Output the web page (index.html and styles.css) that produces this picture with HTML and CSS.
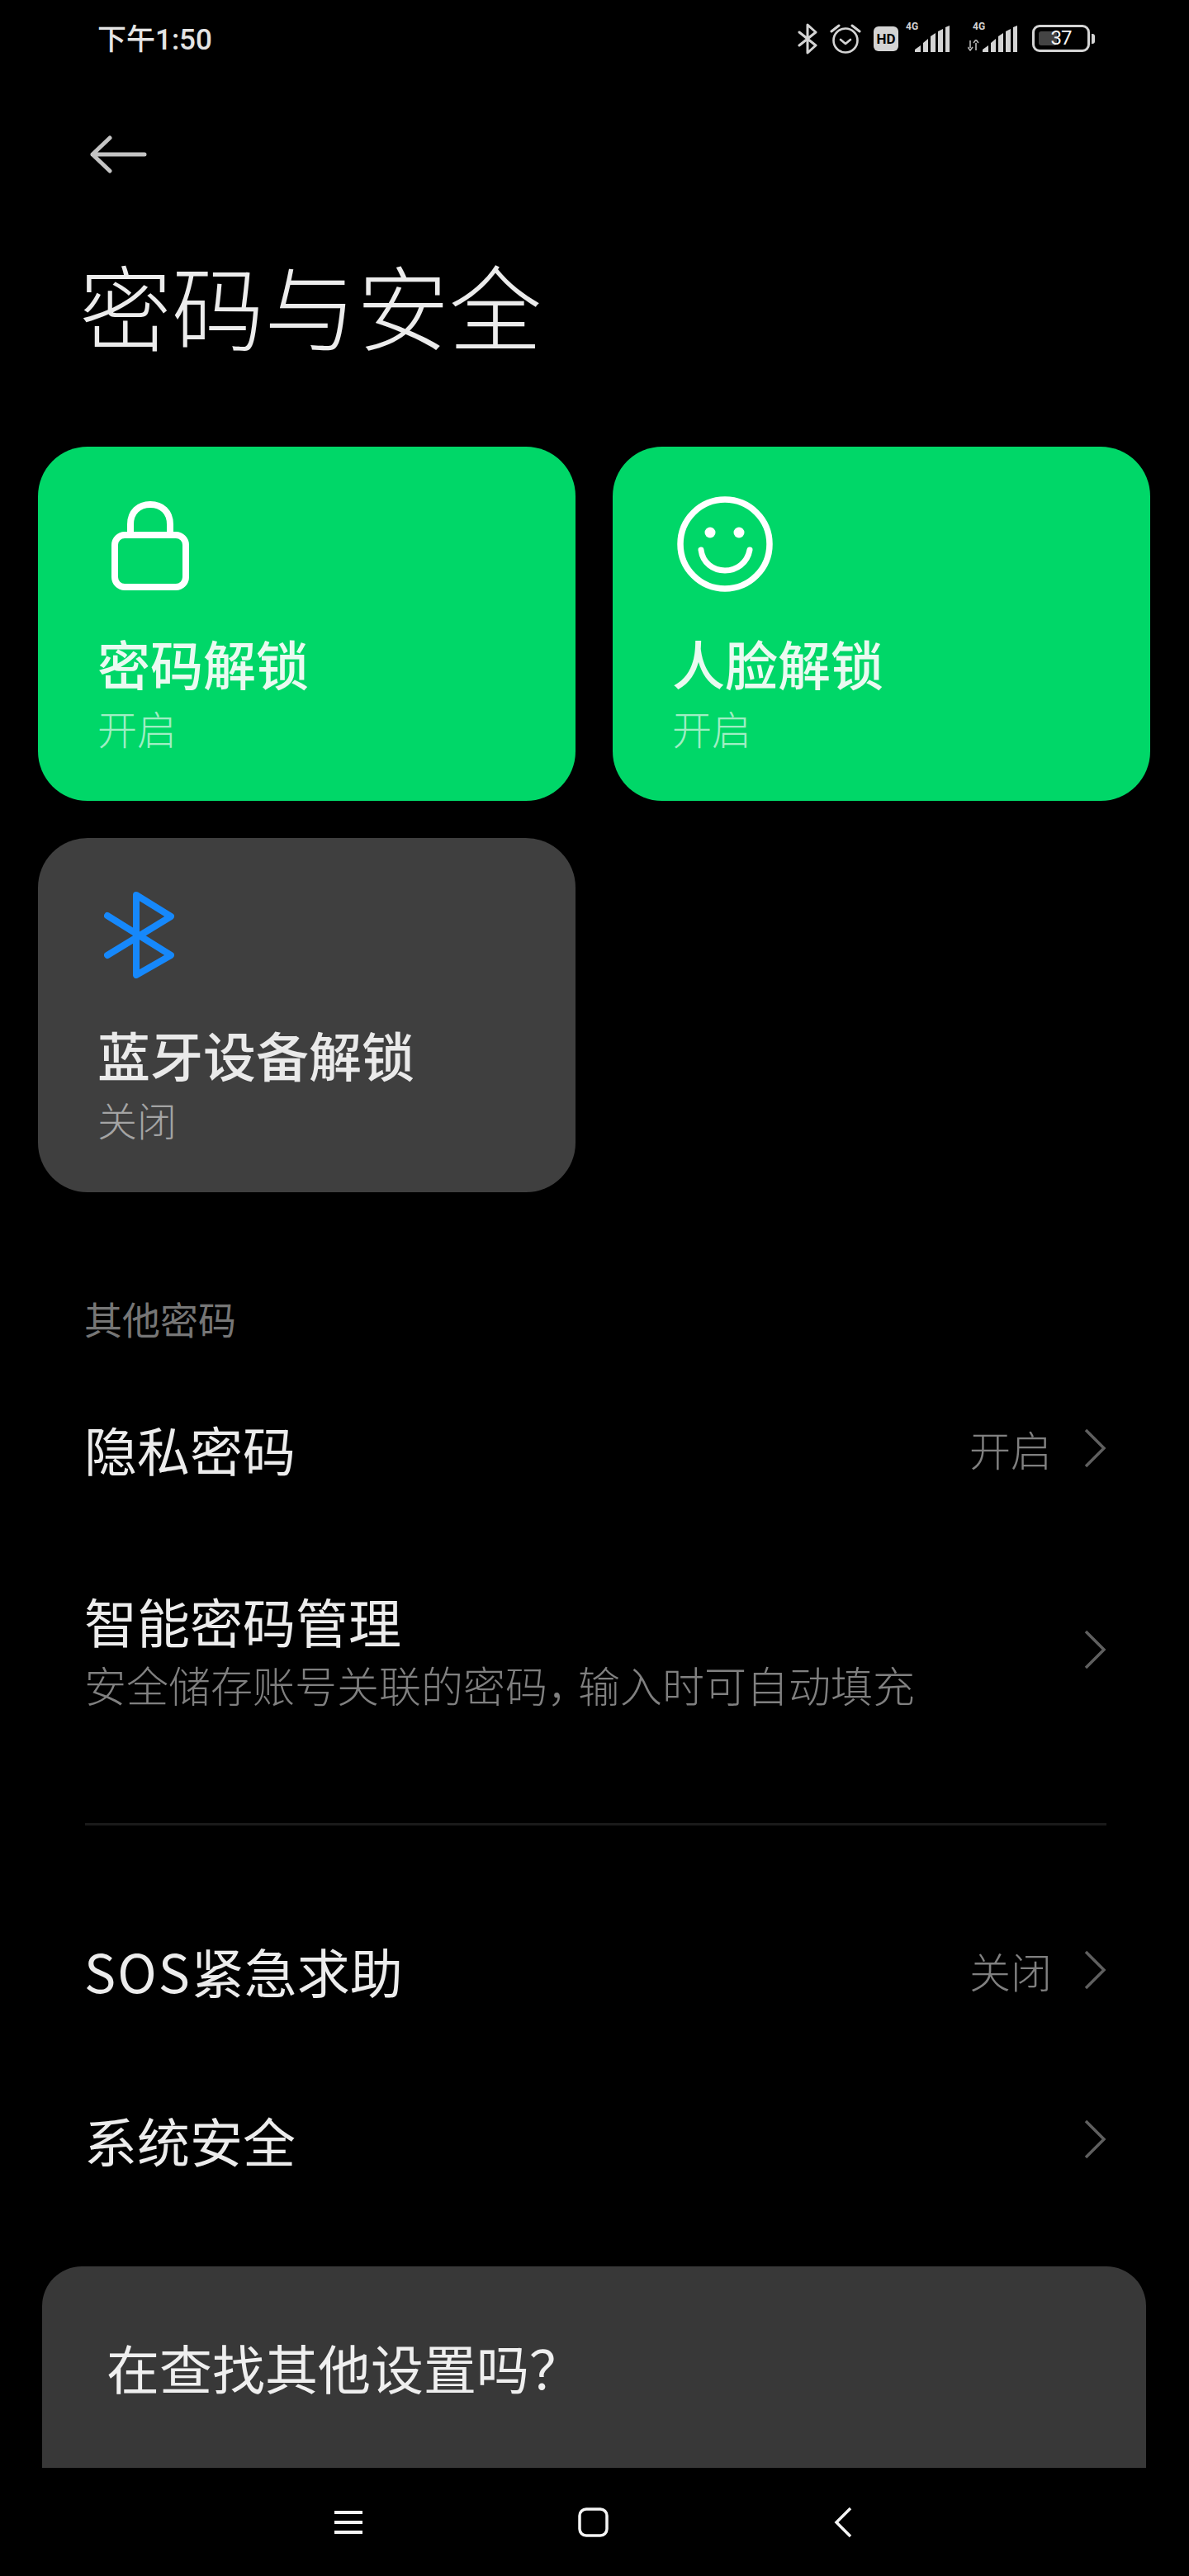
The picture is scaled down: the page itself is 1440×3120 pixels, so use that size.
FILE: index.html
```html
<!DOCTYPE html>
<html lang="zh-CN">
<head>
<meta charset="utf-8">
<title>密码与安全</title>
<link rel="stylesheet" href="styles.css">
</head>
<body>
<div class="screen">
  <header class="status">
    <span class="time">下午1:50</span>
    <div class="status-icons">
      <svg class="si" width="24" height="38" viewBox="0 0 24 38"><path d="M2 11l20 16-10 9V2l10 9L2 27" fill="none" stroke="#d4d4d4" stroke-width="3" stroke-linejoin="round" stroke-linecap="round"/></svg>
      <svg class="si alarm" width="38" height="38" viewBox="0 0 38 38"><circle cx="19" cy="21" r="14.5" fill="none" stroke="#d4d4d4" stroke-width="2.6"/><path d="M13 20l6 5 6-5" fill="none" stroke="#d4d4d4" stroke-width="2.6" stroke-linecap="round" stroke-linejoin="round"/><path d="M2 10l9-7M36 10l-9-7" fill="none" stroke="#d4d4d4" stroke-width="3" stroke-linecap="round"/></svg>
      <span class="hd">HD</span>
      <div class="signal"><span class="net">4G</span><svg width="44" height="32" viewBox="0 0 44 32"><path d="M0 32v-3l7-5v8zM10 32V21l6-5v16zM19 32V13l6-4v23zM28 32V7l6-3v28zM37 32V2l5-2v32z" fill="#d4d4d4"/></svg></div>
      <div class="signal second"><span class="net">4G</span><svg class="arrows" width="14" height="14" viewBox="0 0 14 14"><path d="M3 1v9M0 9l3 4 3-4M10 13V4M7 4l3-4 3 4" stroke="#b8b8b8" stroke-width="1.6" fill="none"/></svg><svg width="44" height="32" viewBox="0 0 44 32"><path d="M0 32v-3l7-5v8zM10 32V21l6-5v16zM19 32V13l6-4v23zM28 32V7l6-3v28zM37 32V2l5-2v32z" fill="#d4d4d4"/></svg></div>
      <div class="battery"><div class="batt-body"><span class="batt-fill"></span><span class="batt-num">37</span></div><span class="batt-cap"></span></div>
    </div>
  </header>

  <div class="back">
    <svg width="70" height="46" viewBox="0 0 70 46"><path d="M24 3L3 23l21 20M3 23h63" fill="none" stroke="#c4c4c4" stroke-width="5" stroke-linecap="round" stroke-linejoin="round"/></svg>
  </div>

  <h1 class="title">密码与安全</h1>

  <section class="cards">
    <article class="card on">
      <div class="card-icon">
        <svg class="lock" width="94" height="108" viewBox="0 0 94 108"><path d="M23 41V28C23 13 33 4 47 4s24 9 24 24v13" fill="none" stroke="#fff" stroke-width="8"/><rect x="4" y="41" width="86" height="63" rx="12" fill="none" stroke="#fff" stroke-width="8"/></svg>
      </div>
      <div class="card-title">密码解锁</div>
      <div class="card-sub">开启</div>
    </article>
    <article class="card on">
      <div class="card-icon">
        <svg class="face" width="116" height="116" viewBox="0 0 116 116"><circle cx="58" cy="58" r="54" fill="none" stroke="#fff" stroke-width="7.5"/><circle cx="40" cy="44" r="6.5" fill="#fff"/><circle cx="75" cy="44" r="6.5" fill="#fff"/><path d="M29 65c2 16 15 25 29 25s27-9 30-25" fill="none" stroke="#fff" stroke-width="7" stroke-linecap="round"/></svg>
      </div>
      <div class="card-title">人脸解锁</div>
      <div class="card-sub">开启</div>
    </article>
    <article class="card off">
      <div class="card-icon">
        <svg class="bt" width="85" height="105" viewBox="0 0 85 105"><path d="M4 29l77 48-42 24V4l42 26L4 77" fill="none" stroke="#1688fb" stroke-width="8" stroke-linejoin="round" stroke-linecap="round"/></svg>
      </div>
      <div class="card-title">蓝牙设备解锁</div>
      <div class="card-sub">关闭</div>
    </article>
  </section>

  <div class="section-label">其他密码</div>

  <div class="row row-a">
    <div class="row-main"><div class="row-title">隐私密码</div></div>
    <span class="row-value">开启</span>
    <svg class="chev" width="28" height="48" viewBox="0 0 28 48"><path d="M3 2l22 22L3 46" fill="none" stroke="#5f5f5f" stroke-width="3.5"/></svg>
  </div>
  <div class="row row-b">
    <div class="row-main two"><div class="row-title">智能密码管理</div><div class="row-desc">安全储存账号关联的密码<span class="comma">，</span>输入时可自动填充</div></div>
    <svg class="chev" width="28" height="48" viewBox="0 0 28 48"><path d="M3 2l22 22L3 46" fill="none" stroke="#5f5f5f" stroke-width="3.5"/></svg>
  </div>
  <div class="divider"></div>
  <div class="row row-c">
    <div class="row-main"><div class="row-title"><span class="latin">SOS</span>紧急求助</div></div>
    <span class="row-value">关闭</span>
    <svg class="chev" width="28" height="48" viewBox="0 0 28 48"><path d="M3 2l22 22L3 46" fill="none" stroke="#5f5f5f" stroke-width="3.5"/></svg>
  </div>
  <div class="row row-d">
    <div class="row-main"><div class="row-title">系统安全</div></div>
    <svg class="chev" width="28" height="48" viewBox="0 0 28 48"><path d="M3 2l22 22L3 46" fill="none" stroke="#5f5f5f" stroke-width="3.5"/></svg>
  </div>

  <section class="find"><div class="find-title">在查找其他设置吗？</div></section>

  <nav class="navbar">
    <svg width="36" height="30" viewBox="0 0 36 30"><path d="M1 3h34M1 15h34M1 27h34" stroke="#f4f4f4" stroke-width="4"/></svg>
    <svg width="37" height="36" viewBox="0 0 37 36"><rect x="2" y="2" width="33" height="32" rx="8" fill="none" stroke="#f4f4f4" stroke-width="3.5"/></svg>
    <svg class="nav-back" width="22" height="38" viewBox="0 0 22 38"><path d="M20 2L3 19l17 17" fill="none" stroke="#f4f4f4" stroke-width="3.5"/></svg>
  </nav>
</div>
</body>
</html>
```

FILE: styles.css
```css
* { box-sizing: border-box; margin: 0; padding: 0; }
html, body { background: #000; }
body { font-family: "Noto Sans CJK SC", "Noto Sans", sans-serif; color: #e9e9e9; }
.screen { width: 1440px; height: 3120px; overflow: hidden; position: relative; display: flex; flex-direction: column; }

.status { height: 96px; padding: 0 114px 0 118px; display: flex; align-items: flex-start; justify-content: space-between; flex: none; }
.time { font-size: 35px; line-height: 48px; font-weight: 500; color: #e4e4e4; font-family: "Roboto", "Noto Sans CJK SC", sans-serif; padding-top: 25px; letter-spacing: 0; }
.status-icons { display: flex; align-items: flex-start; padding-top: 28px; }
.si { display: block; }
.alarm { margin-left: 15px; margin-top: 0; }
.hd { margin-left: 15px; margin-top: 4px; width: 30px; height: 30px; border-radius: 6px; background: #d4d4d4; color: #000; font: 700 17px/30px "Roboto", sans-serif; text-align: center; }
.signal { position: relative; margin-left: 20px; width: 44px; height: 36px; margin-top: 3px; }
.signal svg:last-child { display: block; }
.signal .net { position: absolute; left: -11px; top: -6px; font: 700 12px/14px "Roboto", sans-serif; color: #d4d4d4; }
.signal.second { margin-left: 38px; }
.signal.second .net { left: -12px; }
.signal .arrows { position: absolute; left: -18px; top: 17px; }
.battery { display: flex; align-items: center; margin-left: 16px; margin-top: 2px; }
.batt-body { position: relative; width: 70px; height: 33px; border: 3px solid #d4d4d4; border-radius: 9px; display: flex; align-items: center; justify-content: center; }
.batt-fill { position: absolute; left: 5px; top: 5px; bottom: 5px; width: 22px; background: #444; border-radius: 3px; }
.batt-num { position: relative; font: 400 24px/27px "Roboto", sans-serif; letter-spacing: -1px; color: #f6f6f6; }
.batt-cap { width: 4px; height: 12px; background: #d4d4d4; border-radius: 0 3px 3px 0; margin-left: 2px; }

.back { height: 46px; margin: 68px 0 0 109px; flex: none; }
.back svg { display: block; }

.title { font-size: 112px; line-height: 140px; font-weight: 200; margin: 88px 0 0 96px; color: #ececec; letter-spacing: 0; flex: none; }

.cards { display: grid; grid-template-columns: 651px 651px; grid-auto-rows: 429px; gap: 45px; padding: 0 47px 0 46px; margin-top: 103px; flex: none; }
.card { border-radius: 60px; padding: 0 0 0 72px; display: flex; flex-direction: column; position: relative; }
.card.on { background: #00d768; }
.card.off { background: #3f3f3f; }
.card-icon { height: 219px; position: relative; flex: none; }
.card-icon svg { position: absolute; display: block; }
.lock { left: 17px; top: 66px; }
.face { left: 6px; top: 60px; }
.bt { left: 8px; top: 65px; }
.card-title { font-size: 64px; line-height: 84px; font-weight: 500; color: #eafaf1; }
.card-sub { font-size: 48px; line-height: 62px; font-weight: 300; margin-top: 6px; color: #a0eec4; }
.off .card-title { color: #eaeaea; }
.off .card-sub { color: #a4a4a4; }

.section-label { font-size: 46px; line-height: 60px; margin: 122px 0 0 102px; color: #767676; font-weight: 400; flex: none; }

.row { display: flex; align-items: center; padding: 0 100px 0 102px; flex: none; }
.row-main { flex: 1; min-width: 0; }
.row-main.two { padding-bottom: 6px; }
.row-title { font-size: 64px; line-height: 84px; font-weight: 400; color: #ececec; }
.latin { letter-spacing: 2px; }
.row-desc { font-size: 51px; line-height: 60px; font-weight: 300; color: #808080; margin-top: 6px; }
.comma { letter-spacing: -14px; }
.row-value { font-size: 50px; line-height: 64px; font-weight: 300; color: #808080; margin-right: 38px; }
.chev { display: block; flex: none; }
.row-a { height: 200px; margin-top: 28px; }
.row-b { height: 200px; margin-top: 44px; }
.divider { height: 3px; background: #1a1a1a; margin: 110px 100px 0 103px; flex: none; }
.row-c { height: 200px; margin-top: 75px; }
.row-d { height: 200px; margin-top: 5px; }

.find { position: absolute; left: 51px; right: 52px; top: 2745px; height: 244px; background: #383838; border-radius: 48px 48px 0 0; padding: 78px 0 0 78px; }
.find-title { font-size: 64px; line-height: 86px; font-weight: 400; color: #efefef; }

.navbar { position: absolute; left: 0; right: 0; top: 2989px; height: 131px; background: #000; display: flex; align-items: center; padding: 0 0 0 404px; gap: 260px; }
.navbar svg { display: block; flex: none; }
.nav-back { margin-left: 13px; }
```
